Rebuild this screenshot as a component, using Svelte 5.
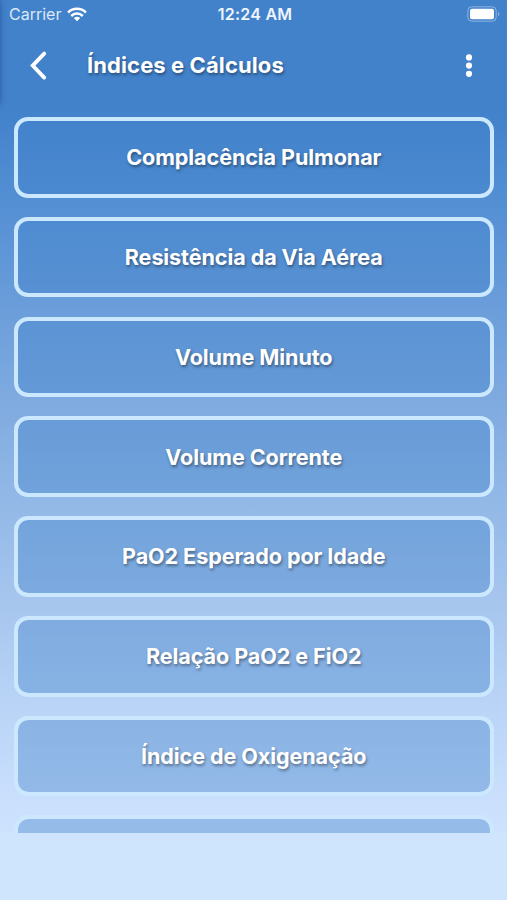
<script lang="ts">
  // the last entry is scrolled almost completely out of the list
  const items = [
    "Complacência Pulmonar",
    "Resistência da Via Aérea",
    "Volume Minuto",
    "Volume Corrente",
    "PaO2 Esperado por Idade",
    "Relação PaO2 e FiO2",
    "Índice de Oxigenação",
    "",
  ];
</script>

<div class="screen">
  <div class="status-bar">
    <div class="carrier">
      <span>Carrier</span>
      <svg width="20" height="15" viewBox="0 0 20 15" fill="none" stroke="#fff" stroke-width="2.5">
        <path d="M1.1 5.5a12.6 12.6 0 0 1 17.8 0" />
        <path d="M4.2 9a8.2 8.2 0 0 1 11.6 0" />
        <path d="M10 14.2 6.8 11a4.5 4.5 0 0 1 6.4 0Z" fill="#fff" stroke="none" />
      </svg>
    </div>
    <span class="time">12:24 AM</span>
    <svg class="battery" width="34" height="16" viewBox="0 0 34 16">
      <rect x="0.8" y="0.8" width="28.4" height="14.4" rx="4" fill="none" stroke="#8fb4e0" />
      <rect x="3" y="2.8" width="24" height="10.4" rx="2" fill="#fff" />
      <path d="M31 6v4q1.4-.6 1.4-2T31 6Z" fill="#8fb4e0" />
    </svg>
  </div>

  <header>
    <button class="icon back" aria-label="Voltar">
      <svg width="20" height="30" viewBox="0 0 20 30" fill="none" stroke="#fff" stroke-width="3.8" stroke-linecap="round" stroke-linejoin="miter">
        <path d="M15.2 2.6 3.7 14.6l11.5 12" />
      </svg>
    </button>
    <h1>Índices e Cálculos</h1>
    <button class="icon more" aria-label="Mais">
      <svg width="8" height="24" viewBox="0 0 8 24" fill="#fff">
        <circle cx="4" cy="3.4" r="3.1" />
        <circle cx="4" cy="11.6" r="3.1" />
        <circle cx="4" cy="19.8" r="3.1" />
      </svg>
    </button>
  </header>

  <main>
    {#each items as label}
      <button class="item">{label}</button>
    {/each}
  </main>
</div>

<style>
  :global(body) {
    background: #cfe5fe;
  }

  .screen {
    position: relative;
    display: flex;
    flex-direction: column;
    height: 900px;
    overflow: hidden;
    color: #fff;
    font-family: Inter, "Liberation Sans", sans-serif;
    background: linear-gradient(
      #4282cb 0,
      #4282cb 110px,
      #5590d4 208px,
      #6a9dda 306px,
      #80abe0 406px,
      #93b9e7 506px,
      #a7c6ee 606px,
      #b9d4f6 706px,
      #cbe0fd 806px,
      #cde2fd 832px,
      #cfe5fe 834px
    );

    /* soft edge of the drawer behind the header */
    &::before {
      content: "";
      position: absolute;
      top: 0;
      left: -8px;
      width: 8px;
      height: 104px;
      box-shadow: 0 0 6px rgb(20 60 120 / 60%);
    }
  }

  .status-bar {
    display: grid;
    grid-template-columns: 1fr auto 1fr;
    align-items: center;
    height: 28px;
    padding: 0 6px 0 9px;
    font-size: 16px;
  }

  .carrier {
    display: flex;
    gap: 6px;
    align-items: center;
    color: #dbe8f7;
  }

  .time {
    color: #eef5fc;
    font-weight: 600;
    letter-spacing: 0.25px;
  }

  .battery {
    justify-self: end;
  }

  header {
    display: flex;
    align-items: center;
    height: 76px;
    padding: 0 34px 0 29px;
  }

  h1 {
    flex: 1;
    margin: 0 0 2px 38px;
    font-size: 22px;
    font-weight: 650;
    letter-spacing: 0.1px;
    text-shadow: 1px 2px 3px rgb(0 0 0 / 40%);
  }

  button {
    padding: 0;
    border: 0;
    background: none;
    color: inherit;
    font: inherit;
  }

  .icon {
    display: flex;
  }

  main {
    display: flex;
    flex-direction: column;
    gap: 19.2px;
    height: 716px;
    margin-top: 13px;
    padding: 0 13.5px 0 14px;
    overflow: hidden;
  }

  .item {
    flex: none;
    height: 80.6px;
    border: 4px solid #cbe8ff;
    border-radius: 14px;
    background: rgb(66 130 203 / 40%);
    background-clip: padding-box;
    font-size: 21.6px;
    font-weight: 650;
    letter-spacing: -0.1px;
    text-shadow: 1px 2px 3px rgb(0 0 0 / 40%);
  }
</style>
